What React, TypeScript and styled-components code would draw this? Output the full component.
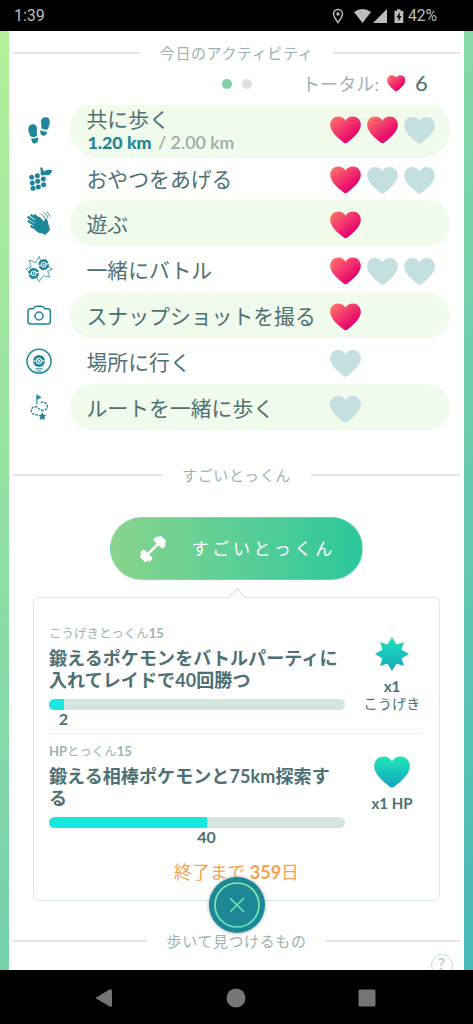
import React from "react";
import styled, { createGlobalStyle } from "styled-components";

const Global = createGlobalStyle`
  body { margin: 0; background: #000; }
  *, *::before, *::after { box-sizing: border-box; }
  svg { display: block; flex: none; }
`;

const Phone = styled.div`
  width: 473px;
  height: 1024px;
  display: flex;
  flex-direction: column;
  overflow: hidden;
  background: #000;
  font-family: Lato, "Noto Sans CJK JP", sans-serif;
  color: #4c7073;
  white-space: nowrap;
`;

const StatusBar = styled.header`
  height: 31px;
  flex: none;
  padding: 1px 36px 0 14px;
  display: flex;
  align-items: center;
  font: 500 16px/30px Roboto, sans-serif;
  color: #bdbdbd;
`;
const Clock = styled.span`
  flex: 1;
  font-weight: 400;
`;
const Battery = styled.span`
  width: 29px;
  font-size: 15.7px;
  font-weight: 400;
  letter-spacing: -0.1px;
`;

const Screen = styled.main`
  height: 939px;
  flex: none;
  padding: 0 9px;
  overflow: hidden;
  background: linear-gradient(124deg, #b3f09a, #45bab8);
`;
const Sheet = styled.div`
  position: relative;
  height: 939px;
  padding: 11px 4px 0;
  display: flex;
  flex-direction: column;
  overflow: hidden;
  background: #fff;
`;

const SectionTitle = styled.h2<{ $top?: number }>`
  height: 22px;
  flex: none;
  margin: ${(p) => p.$top ?? 0}px 0 0;
  display: flex;
  align-items: center;
  gap: 20px;
  font-size: 15px;
  line-height: 22px;
  font-weight: 400;
  letter-spacing: 0.6px;
  color: #9cb2b3;
  &::before, &::after {
    content: "";
    flex: 1;
    height: 2px;
    background: #e4e6e6;
  }
`;

const Summary = styled.div`
  height: 41px;
  flex: none;
  padding: 0 0 2px 208.5px;
  display: flex;
  align-items: center;
  gap: 10px;
`;
const Dot = styled.i<{ $on?: boolean }>`
  width: 10px;
  height: 10px;
  border-radius: 50%;
  background: ${(p) => (p.$on ? "#7fd0a3" : "#e0e0e0")};
`;
const TotalLabel = styled.span`
  width: 76px;
  margin-left: 40.5px;
  margin-right: -1.5px;
  font-size: 18px;
  line-height: 24px;
  letter-spacing: 0.1px;
  color: #9cb2b3;
`;
const TotalValue = styled.span`
  font-size: 22px;
  line-height: 24px;
  padding-bottom: 2px;
`;

const Activities = styled.ul`
  margin: 0;
  padding: 0 10px 0 12px;
  list-style: none;
  overflow: hidden;
  height: 325px;
  flex: none;
`;
const Activity = styled.li<{ $h: number; $lift?: number }>`
  height: ${(p) => p.$h}px;
  margin-top: ${(p) => -(p.$lift ?? 0)}px;
  display: flex;
  align-items: center;
`;
const Pill = styled.div<{ $tint?: boolean; $pad: number; $tall?: boolean }>`
  width: 380px;
  height: 100%;
  margin-left: 17px;
  padding: ${(p) => p.$pad}px 14px 0 16.5px;
  display: flex;
  align-items: center;
  border-radius: ${(p) => (p.$tall ? 28 : 23)}px;
  background: ${(p) => (p.$tint ? "#f0fbeb" : "transparent")};
`;
const ActivityText = styled.div`
  width: 243px;
  font-size: 20.85px;
  line-height: 24px;
`;
const Progress = styled.div`
  font-size: 17.8px;
  line-height: 22px;
  color: #9aabac;
  font-weight: 600;
  padding-left: 1px;
  b { color: #1e8698; margin-right: 2px; }
`;
const Hearts = styled.div`
  display: flex;
  gap: 6px;
  padding-top: 1px;
`;

const TrainingButton = styled.button`
  width: 253px;
  height: 63px;
  flex: none;
  margin: 31px auto 0;
  padding: 0 0 0 29px;
  display: flex;
  align-items: center;
  gap: 25.5px;
  border: 1px solid #ffffff30;
  border-radius: 32px;
  background: linear-gradient(90deg, #88d48c, #5bce96 50%, #2cc79d);
  color: #fff;
  font: 400 17.1px/24px Lato, "Noto Sans CJK JP", sans-serif;
  letter-spacing: 3.6px;
`;

const Card = styled.section`
  position: relative;
  width: 407px;
  height: 304px;
  flex: none;
  margin: 17px auto 0;
  padding: 25px 16px 0 15px;
  border: 1.5px solid #d9e8eb;
  border-radius: 6px;
`;
const Pointer = styled.svg`
  position: absolute;
  left: 191.5px;
  top: -11px;
`;
const Task = styled.article<{ $last?: boolean }>`
  height: ${(p) => (p.$last ? 117 : 111)}px;
  margin-bottom: ${(p) => (p.$last ? 0 : 7)}px;
  display: flex;
  border-bottom: ${(p) => (p.$last ? "none" : "1px solid #eef1f1")};
`;
const TaskBody = styled.div`
  width: 296px;
`;
const TaskLabel = styled.div`
  height: 20px;
  font-size: 12.5px;
  line-height: 20px;
  color: #9cb2b3;
  b { font-size: 13px; }
`;
const TaskTitle = styled.h3`
  width: 292px;
  height: 43px;
  margin: 5px 0 8px;
  font-size: 18px;
  line-height: 21.5px;
  font-weight: 700;
  letter-spacing: 0.1px;
  white-space: pre-line;
`;
const Track = styled.div`
  height: 11px;
  border-radius: 5.5px;
  overflow: hidden;
  background: #d2e5df;
`;
const Fill = styled.div<{ $w: number }>`
  width: ${(p) => p.$w}px;
  height: 100%;
  background: #18e9de;
`;
const Count = styled.div<{ $x: number }>`
  width: ${(p) => p.$x * 2}px;
  text-align: center;
  font-size: 16px;
  line-height: 18px;
  font-weight: 700;
`;
const Reward = styled.aside<{ $top: number }>`
  flex: 1;
  padding: ${(p) => p.$top}px 0 0 16px;
  display: flex;
  flex-direction: column;
  align-items: center;
  font-size: 14.2px;
  line-height: 17px;
  b { font-size: 15px; margin-top: 7px; }
`;
const Deadline = styled.p`
  margin: 1.5px 0 0 1px;
  text-align: center;
  font-size: 17.8px;
  line-height: 24px;
  color: #f3a34f;
  b { font-size: 18px; }
`;
const CloseButton = styled.button`
  position: absolute;
  left: 199.5px;
  top: 845.5px;
  width: 56px;
  height: 56px;
  padding: 0;
  border: 0;
  border-radius: 50%;
  background: #1d8795;
  box-shadow: 0 0 3px 1px #6b7c8566;
`;
const Help = styled.span`
  align-self: flex-end;
  width: 22px;
  height: 22px;
  flex: none;
  margin: 2.5px 7.5px 0 0;
  border: 1.5px solid #ccd8d9;
  border-radius: 50%;
  text-align: center;
  font-size: 17px;
  line-height: 18px;
  font-weight: 700;
  color: #c0cecf;
`;

const NavBar = styled.nav`
  flex: 1;
  padding: 2px 97px 0 95px;
  display: flex;
  align-items: center;
  justify-content: space-between;
`;

const teal = "#1e8698";

function Heart({ kind, width = 31 }: { kind: "full" | "empty" | "hp"; width?: number }) {
  const fill = kind === "full" ? "url(#love)" : kind === "hp" ? "url(#stat)" : "#c3dfe0";
  return (
    <svg width={width} height={(width * 28) / 31} viewBox={kind === "empty" ? "0 -0.5 31 28" : "0 0 31 28"}>
      <path
        fill={fill}
        d="M15.5 27.3C14.2 27.3 12.6 25.7 10.8 24.2C5.500 19.800.2 14.700.2 8.800C.2 3.900 3.900.5 8.200.5C11.700.5 14.200 2.200 15.500 4.800C16.800 2.200 19.300.5 22.800.5C27.100.5 30.800 3.900 30.800 8.800C30.800 14.700 25.500 19.800 20.200 24.200C18.400 25.700 16.800 27.300 15.500 27.300Z"
      />
    </svg>
  );
}

function Ball({ x, y, r, tilt = -12 }: { x: number; y: number; r: number; tilt?: number }) {
  return (
    <g transform={`translate(${x} ${y}) rotate(${tilt}) scale(${r / 15})`}>
      <circle r="15" fill={teal} />
      <path d="M-16 0H-8M8 0H16" stroke="#fff" strokeWidth="3" />
      <circle r="6.800" fill={teal} stroke="#fff" strokeWidth="3" />
      <circle r="2.600" fill="#fff" />
    </g>
  );
}

const icons: Record<string, React.ReactNode> = {
  steps: (
    <g fill={teal}>
      <path d="M99 71C108 71 113 78 112 87C111 93 111 99 112 105C107 109 98 110 92 107C90 99 86 94 86 86C86 77 91 71 99 71Z" />
      <path d="M95 113Q106 115 115 110C117 119 114 128 105 129C98 129 95 122 95 113Z" />
      <path d="M136 50C145 49 151 55 150 65C150 73 146 79 145 86C138 89 130 87 125 83C126 76 124 72 124 65C124 56 128 51 136 50Z" />
      <path d="M122 89Q132 94 142 93C142 102 137 106 130 105C123 104 121 98 122 89Z" />
    </g>
  ),
  berries: (
    <g fill={teal}>
      {[[96, 227], [113, 222], [130, 214], [98, 244], [114, 239], [131, 232], [100, 260], [116, 256], [132, 249]].map(([x, y]) => (
        <circle key={`${x}-${y}`} cx={x} cy={y} r="7.500" />
      ))}
      <path d="M122 197Q131 198 130 208L134 213Q137 203 145 204L158 206C155 220 142 226 132 216L125 213Q121 207 122 197Z" />
    </g>
  ),
  wave: (
    <g fill={teal} stroke={teal} strokeLinecap="round" strokeLinejoin="round">
      <path d="M104 362L120 350L132 365L135 359Q137 353 142 357L149 382L151 390L137 405L127 400Q115 400 106 389Z" stroke="none" />
      <g strokeWidth="7" fill="none">
        <path d="M120 365L95 346M114 371L86 352M111 379L87 364M114 388L95 379M126 362L105 346" />
      </g>
      <g strokeWidth="2.400" fill="none">
        <path d="M124 342Q134 346 137 356M132 338Q143 343 145 354M140 335Q151 341 152 350" />
      </g>
    </g>
  ),
  battle: (
    <g>
      <path
        d="M118 34L123 48L138 43L139 62L158 72L144 79L150 97L131 92L118 110L112 97L95 101L92 85L79 72L94 66L89 45L108 54Z"
        fill="#fff"
        stroke={teal}
        strokeWidth="2.200"
      />
      <Ball x={132} y={59} r={16} />
      <Ball x={102} y={85} r={16} />
    </g>
  ),
  camera: (
    <g fill="none" stroke={teal} strokeWidth="4.500" strokeLinejoin="round">
      <path d="M92 191H101Q105 184 111 184H125Q131 184 135 191H144Q152 191 152 199V229Q152 237 144 237H93Q85 237 85 229V199Q85 191 92 191Z" />
      <circle cx="118" cy="213" r="12" />
    </g>
  ),
  place: (
    <g>
      <circle cx="118" cy="348.500" r="36" fill="none" stroke={teal} strokeWidth="4.500" />
      <Ball x={118} y={348} r={18} tilt={0} />
      <path d="M107 371.500H129M112 378H124" stroke={teal} strokeWidth="3" />
    </g>
  ),
  route: (
    <g fill="none" stroke={teal} strokeWidth="4">
      <path d="M111.500 480V450" strokeWidth="3" />
      <path d="M112 450L126 458L112 465Z" fill={teal} stroke="none" />
      <path strokeDasharray="8 3" d="M123 473C136 471 143 477 143 486C143 494 135 498 127 497C117 495 117 487 108 486C98 486 94 492 95 499C96 507 104 511 115 511" />
      <path fill={teal} stroke="none" d="M128 503L132 510L140 511L134 517L136 526L128 522L120 526L122 517L116 511L124 510Z" />
    </g>
  ),
};

const rows = [
  { icon: "steps", box: "76 46 84 84", h: 57, pad: 0, text: "共に歩く", hearts: [1, 1, 0], tint: true, progress: true },
  { icon: "berries", box: "76 190 84 84", h: 42, pad: 0, text: "おやつをあげる", hearts: [1, 0, 0] },
  { icon: "wave", box: "76 327 84 84", h: 46, pad: 2, text: "遊ぶ", hearts: [1], tint: true },
  { icon: "battle", box: "76 30 84 84", h: 46.5, pad: 2, text: "一緒にバトル", hearts: [1, 0, 0] },
  { icon: "camera", box: "76 168 84 84", h: 45.5, pad: 2, text: "スナップショットを撮る", hearts: [1], tint: true },
  { icon: "place", box: "76 306 84 84", h: 46, pad: 2, text: "場所に行く", hearts: [0] },
  { icon: "route", box: "76 445 84 84", h: 46, pad: 2, text: "ルートを一緒に歩く", hearts: [0], tint: true },
];

export default function App() {
  return (
    <Phone>
      <Global />
      <svg width="0" height="0">
        <defs>
          <linearGradient id="love" x1="0.1" y1="0.1" x2="0.75" y2="0.8">
            <stop offset="0" stopColor="#ff6b69" />
            <stop offset="1" stopColor="#e6006e" />
          </linearGradient>
          <linearGradient id="stat" x1="0" y1="0" x2="0" y2="1">
            <stop offset="0" stopColor="#20e5b2" />
            <stop offset="1" stopColor="#12a5c5" />
          </linearGradient>
          <linearGradient id="ring" x1="0" y1="0" x2="0" y2="56" gradientUnits="userSpaceOnUse">
            <stop offset="0" stopColor="#91eda0" />
            <stop offset="1" stopColor="#5de0c0" />
          </linearGradient>
        </defs>
      </svg>
      <StatusBar>
        <Clock>1:39</Clock>
        <svg width="77" height="16" viewBox="331 7 77 16" fill="#bdbdbd">
          <path d="M338 21.500C335 17.500 333.500 15 333.500 13A4.500 4.500 0 0 1 342.500 13C342.500 15 341 17.500 338 21.500Z" fill="none" stroke="#bdbdbd" strokeWidth="1.400" />
          <circle cx="338" cy="13" r="1.700" />
          <path d="M354 11Q362.500 5 371 11L362.500 22Z" />
          <path d="M387 8V22H373Z" />
          <path d="M397 8.200H400.500V9.700H403.300V22H394.500V9.700H397Z" />
          <path d="M399.700 11L396.500 16.500H398.500V20.500L401.500 15H399.700Z" fill="#000" />
        </svg>
        <Battery>42%</Battery>
      </StatusBar>

      <Screen>
        <Sheet>
          <SectionTitle>今日のアクティビティ</SectionTitle>
          <Summary>
            <Dot $on />
            <Dot />
            <TotalLabel>トータル:</TotalLabel>
            <Heart kind="full" width={18.5} />
            <TotalValue>6</TotalValue>
          </Summary>
          <Activities>
            {rows.map((r) => (
              <Activity key={r.icon} $h={r.h} $lift={r.progress ? 4 : 0}>
                <svg width="28" height="28" viewBox={r.box}>{icons[r.icon]}</svg>
                <Pill $tint={r.tint} $tall={r.progress} $pad={r.pad}>
                  <ActivityText>
                    {r.text}
                    {r.progress && (
                      <Progress>
                        <b>1.20 km</b> / 2.00 km
                      </Progress>
                    )}
                  </ActivityText>
                  <Hearts>
                    {r.hearts.map((on, i) => (
                      <Heart key={i} kind={on ? "full" : "empty"} />
                    ))}
                  </Hearts>
                </Pill>
              </Activity>
            ))}
          </Activities>

          <SectionTitle $top={34}>すごいとっくん</SectionTitle>
          <TrainingButton>
            <svg width="26" height="26" viewBox="-13 -13 26 26">
              <g transform="rotate(-45)" fill="#fff">
                <rect x="-9" y="-1.300" width="18" height="2.600" />
                <rect x="-12" y="-6.700" width="5.500" height="13.400" rx="1.800" />
                <rect x="6.500" y="-6.700" width="5.500" height="13.400" rx="1.800" />
                <rect x="-15" y="-4.500" width="5" height="9" rx="1.500" />
                <rect x="10" y="-4.500" width="5" height="9" rx="1.500" />
              </g>
            </svg>
            すごいとっくん
          </TrainingButton>

          <Card>
            <Pointer width="22" height="12" viewBox="0 0 22 12">
              <path d="M1.500 11.500L11 1.500L20.500 11.500" fill="#f8f9f9" stroke="#d9e8eb" strokeWidth="1.300" />
            </Pointer>
            <Task>
              <TaskBody>
                <TaskLabel>こうげきとっくん<b>15</b></TaskLabel>
                <TaskTitle>{"鍛えるポケモンをバトルパーティに\n入れてレイドで40回勝つ"}</TaskTitle>
                <Track><Fill $w={15} /></Track>
                <Count $x={14.5}>2</Count>
              </TaskBody>
              <Reward $top={13.5}>
                <svg width="34" height="34" viewBox="-17 -17 34 34">
                  <path fill="url(#stat)" d="M0-17L4.500-9.500L12-12L9.500-4.500L17 0L9.500 4.500L12 12L4.500 9.500L0 17L-4.500 9.500L-12 12L-9.500 4.500L-17 0L-9.500-4.500L-12-12L-4.500-9.500Z" />
                </svg>
                <b>x1</b>
                こうげき
              </Reward>
            </Task>
            <Task $last>
              <TaskBody>
                <TaskLabel><b>HP</b>とっくん<b>15</b></TaskLabel>
                <TaskTitle>{"鍛える相棒ポケモンと75km探索す\nる"}</TaskTitle>
                <Track><Fill $w={158} /></Track>
                <Count $x={157.5}>40</Count>
              </TaskBody>
              <Reward $top={14.5}>
                <Heart kind="hp" width={36} />
                <b>x1 HP</b>
              </Reward>
            </Task>
            <Deadline>終了まで <b>359</b>日</Deadline>
          </Card>

          <SectionTitle $top={28.5}>歩いて見つけるもの</SectionTitle>
          <Help>?</Help>
          <CloseButton aria-label="close">
            <svg width="56" height="56" viewBox="0 0 56 56" fill="none" stroke="url(#ring)">
              <circle cx="28" cy="28" r="22" strokeWidth="1.700" />
              <path d="M21.200 21.200L34.800 34.800M34.800 21.200L21.200 34.800" strokeWidth="1.500" />
            </svg>
          </CloseButton>
        </Sheet>
      </Screen>

      <NavBar>
        <svg width="18" height="20" viewBox="0 0 18 20">
          <path d="M2 9L14.500 1.500Q17 .3 17 3V17Q17 19.700 14.500 18.500L2 11Q-.8 10 2 9Z" fill="#757575" />
        </svg>
        <svg width="20" height="20"><circle cx="10" cy="10" r="9.500" fill="#757575" /></svg>
        <svg width="18" height="18"><rect x=".5" y=".5" width="17" height="17" rx="1.500" fill="#757575" /></svg>
      </NavBar>
    </Phone>
  );
}
